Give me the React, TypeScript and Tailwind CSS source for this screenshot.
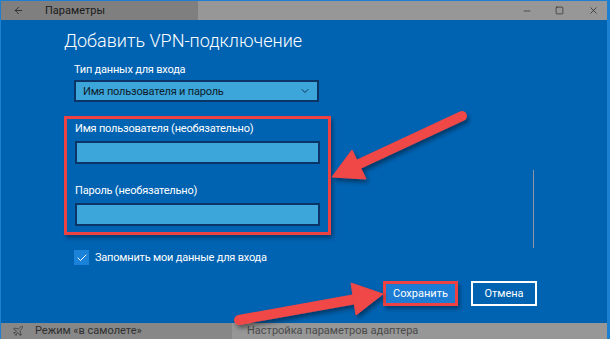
import { Check, ChevronDown, ArrowLeft, Minus, Square, X, Plane } from "lucide-react";

const FONT = { fontFamily: 'Roboto, "Noto Sans", sans-serif' };

function Field({ label }: { label: string }) {
  return (
    <div>
      <div className="text-[11px] leading-[16px] tracking-[-0.2px] text-white">{label}</div>
      <div className="mt-[4px] h-[23px] w-[245px] border-2 border-[#0a3566] bg-[#3ca5d9]" />
    </div>
  );
}

function Arrows() {
  return (
    <svg className="pointer-events-none absolute inset-0" width="610" height="339" viewBox="0 0 610 339">
      <defs>
        <filter id="sh" x="-20%" y="-20%" width="140%" height="140%">
          <feDropShadow dx="2" dy="3" stdDeviation="2.5" floodColor="#000" floodOpacity="0.45" />
        </filter>
      </defs>
      <g filter="url(#sh)" fill="#f04646" stroke="#f04646">
        <line x1="461" y1="115" x2="356" y2="164" strokeWidth="10" strokeLinecap="round" />
        <polygon points="331,176 365,178 351,149" strokeWidth="1" strokeLinejoin="round" />
        <line x1="238" y1="319" x2="355" y2="298" strokeWidth="10" strokeLinecap="round" />
        <polygon points="382,293 350,282 355,314" strokeWidth="1" strokeLinejoin="round" />
      </g>
    </svg>
  );
}

export default function App() {
  return (
    <div
      className="relative flex h-[339px] w-[610px] flex-col overflow-hidden border-t border-l border-r-[3px] border-[#1d7fd2] bg-[#0063b2]"
      style={FONT}
    >
      {/* Title bar */}
      <div className="flex h-[19px] shrink-0 items-center">
        <div className="flex h-full w-[197px] items-center bg-[#7f7f7f]">
          <ArrowLeft className="ml-[12px] h-[11px] w-[11px] text-[#1a1a1a]" strokeWidth={1.6} />
          <span className="ml-[21px] text-[11px] leading-none text-[#1a1a1a]">Параметры</span>
        </div>
        <div className="flex h-full flex-1 items-center justify-end bg-[#979797] pr-[8px] text-[#1a1a1a]">
          <Minus className="h-[10px] w-[10px]" strokeWidth={1.4} />
          <Square className="ml-[23px] h-[9px] w-[9px]" strokeWidth={1.6} />
          <X className="ml-[24px] h-[11px] w-[11px]" strokeWidth={1.4} />
        </div>
      </div>

      {/* Dialog */}
      <div className="relative flex-1 text-white">
        <div className="pl-[63px] pt-[8px] text-[18px] font-light leading-[26px]">Добавить VPN-подключение</div>

        <div className="pl-[73px]">
          <div className="mt-[8px] text-[11px] leading-[16px] tracking-[-0.2px]">Тип данных для входа</div>
          <div className="mt-[2px] flex h-[22px] w-[245px] items-center justify-between border-2 border-[#0a3566] bg-[#3ca5d9] pl-[7px] pr-[6px]">
            <span className="text-[11px] leading-none tracking-[-0.2px] text-[#0d1b2a]">Имя пользователя и пароль</span>
            <ChevronDown className="h-[12px] w-[12px] text-[#0d2a48]" strokeWidth={1.8} />
          </div>
        </div>

        <div className="ml-[63px] mt-[14px] w-[267px] border-[3px] border-[#ee4242] pb-[6px] pl-[8px] pt-[2px] shadow-[2px_3px_4px_rgba(0,0,0,0.35)]">
          <Field label="Имя пользователя (необязательно)" />
          <div className="mt-[19px]">
            <Field label="Пароль (необязательно)" />
          </div>
        </div>

        <div className="ml-[73px] mt-[15px] flex items-center">
          <div className="flex h-[15px] w-[15px] items-center justify-center bg-[#1a82d8]">
            <Check className="h-[12px] w-[12px] text-white" strokeWidth={2} />
          </div>
          <span className="ml-[6px] text-[11px] leading-none tracking-[-0.2px]">Запомнить мои данные для входа</span>
        </div>

        <div className="mt-[16px] flex w-[536px] justify-end gap-[13px]">
          <div className="flex h-[25px] w-[75px] items-center justify-center border-[3px] border-[#ee4242] bg-[#1c7bd3] shadow-[2px_3px_4px_rgba(0,0,0,0.35)]">
            <span className="text-[11px] leading-none">Сохранить</span>
          </div>
          <div className="flex h-[25px] w-[66px] items-center justify-center border-2 border-white">
            <span className="text-[11px] leading-none">Отмена</span>
          </div>
        </div>

        {/* scroll indicator */}
        <div className="absolute left-[532px] top-[150px] h-[78px] w-px bg-[#8c93a3]" />
      </div>

      {/* Bottom bar */}
      <div className="flex h-[16px] shrink-0 overflow-hidden">
        <div className="flex w-[231px] items-center bg-[#878787] text-[#303030]">
          <Plane className="ml-[11px] h-[12px] w-[12px]" strokeWidth={1.3} />
          <span className="ml-[11px] text-[11px] leading-[14px]">Режим «в самолете»</span>
        </div>
        <div className="flex flex-1 items-center bg-[#979797] pl-[15px] text-[#4a4a4a]">
          <span className="text-[11px] leading-[14px]">Настройка параметров адаптера</span>
        </div>
      </div>

      <Arrows />
    </div>
  );
}
